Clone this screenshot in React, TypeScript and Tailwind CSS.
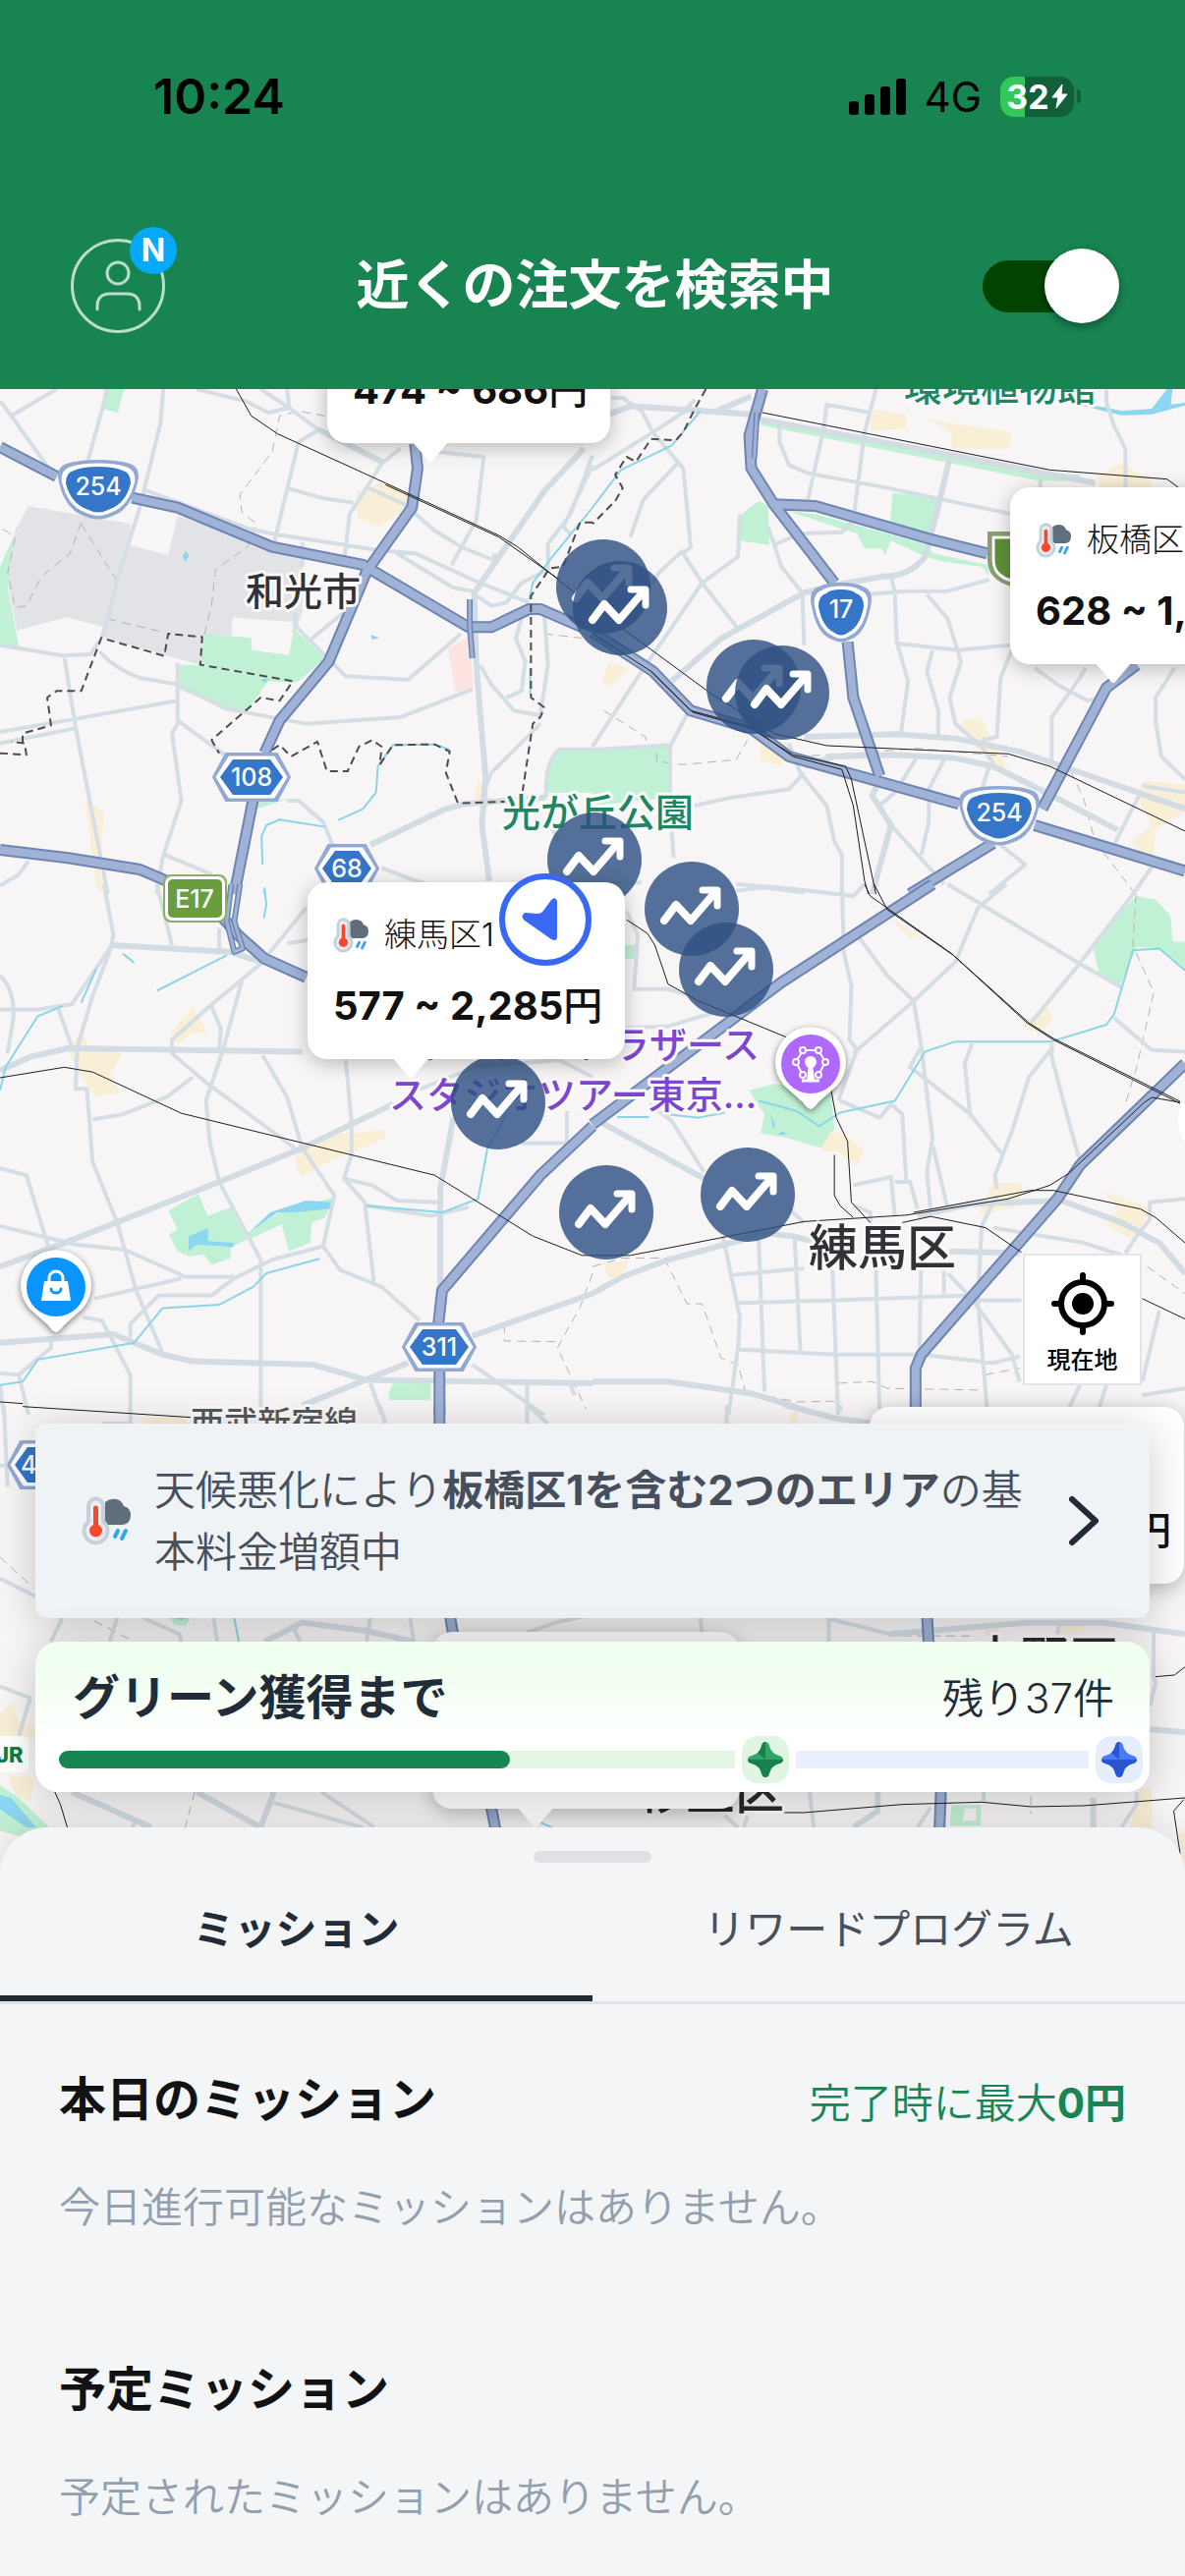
import { useState } from 'react';

type Tile = {
  transform: string;
  base?: string;
  blank?: string;
  park?: string;
  town?: string;
  hospital?: string;
  lake?: string;
  stream?: string;
  minor: string;
  main?: string;
  highway?: string;
  ramp?: string;
  rail?: string;
  border?: string;
  ward?: string;
};

const tiles: Tile[] = [
  {
    transform: 'translate(0 390) scale(.3846 .3333)',
    base: 'M75 375L345 430L345 495L445 525L470 405L720 500L800 520V700L780 760L615 770L540 768L530 860L265 775L275 745L175 715L45 755L15 580L40 450Z',
    blank: 'M615 715L775 730L765 830L668 815V775L612 770Z',
    park: 'M540 765L665 778V815L765 828L778 750L860 840L790 910L775 915L530 860ZM475 860L530 862L775 915L710 910L655 1000L590 990L475 935ZM35 470L0 560V800L50 805L20 620ZM275 18H328L312 90L270 78ZM1480 1118L1568 1120V1250H1445Q1440 1160 1480 1118ZM680 1278L760 1270L680 1300Z',
    town: 'M945 330L1015 300L1085 340L1060 400L1000 440L945 410ZM225 1270L275 1310L265 1480L275 1560L255 1540ZM1265 1210L1300 1270L1255 1270Z',
    hospital: 'M1185 810L1245 770L1252 935L1205 942Z',
    lake: 'M492 512L500 528L490 545L483 528ZM980 768L1005 778L985 783ZM690 905L712 903L700 915Z',
    stream: 'M1190 1120L1150 1103L1040 1105L1000 1170L995 1250L960 1300L895 1335M860 1355L740 1333L705 1350L692 1385L695 1470M1568 380L1455 540L1410 610L1400 660M1403 870V950M700 1540V1560',
    minor: 'M0 55L30 100L135 270M150 18L30 100M285 18L232 240M432 18L425 120L370 380L310 600L285 720L268 780M380 325L660 445L720 460L1000 510L1100 520L1250 600L1400 670M520 18L650 55L710 90L765 75L760 18M690 18L765 75L840 140L1010 240M840 145L790 180L725 490M765 322L850 350L935 365M1060 200L1010 245L970 320L925 400L910 550M975 320L1070 370L1150 450L1220 500L1305 540L1310 520M1160 210L1280 225L1260 420L1195 555M1568 220L1510 400L1450 490V570L1380 610L1340 670L1300 680L1250 640M1568 250L1490 440L1510 460M1050 520L1200 625L1250 635M800 485V560M780 700L785 745L915 895L1080 905L1220 765M910 700L820 785M0 800L165 832L240 828L265 785M265 820Q300 870 370 900L470 920L600 995L810 1040L1060 1020L1250 935M470 855V1030L600 1140M0 1065L200 1025L470 970M0 1100L195 1055M170 835L200 1050L285 1560M475 1030L455 1070L480 1275L430 1450L415 1560M1270 860L1300 920L1360 1000L1430 1015M1385 700L1365 780L1390 850L1380 940L1340 960M1440 700L1450 860L1430 1010M1430 1040L1300 1190L1280 1250M760 1275H790L855 1340L880 1410M435 1440L560 1500M0 1535L50 1500L75 1460M1010 1480L1100 1520L1230 1560M1445 1265Q1440 1160 1480 1118H1568M1445 1330L1480 1400',
    main: 'M1545 200L1440 330L1255 640L1260 850L1270 1000L1285 1200L1275 1350L1295 1520M980 1410L1180 1300L1230 1285L1445 1265M840 140L1010 240',
    highway: 'M0 195L150 285M350 350L470 380L720 500L960 555L1240 745H1300L1400 690H1430L1540 745M1098 185L1105 260L1090 380L970 575L925 700L870 850L740 1030L700 1130M670 1270L620 1560M0 1425L180 1450L370 1485L440 1520',
    ramp: 'M1243 660V740L1250 840',
    rail: 'M625 18L665 100L735 155L1020 305L1320 465L1370 500L1520 640M1020 310L1320 470L1480 600',
    border: 'M0 1130L70 1135L65 1100L30 1095M60 1100V1070L135 1045L125 960L150 940H215L268 778L435 833L445 765L535 775L530 860L775 910L740 970L690 960L560 1090L580 1130M720 1120L740 1105L770 1140L840 1095L865 1185H920L950 1110L985 1090L1010 1110L1005 1165L1040 1105L1150 1103L1190 1125L1180 1190L1212 1283L1335 1278M1568 425H1535L1490 560L1455 565L1405 650V960L1440 990L1430 1020L1410 1040L1383 1245',
    ward: 'M860 100L790 85L740 100L720 210L635 340L640 395L680 430L655 500L570 570L560 680L540 770M215 425L185 520L110 590L70 680L40 685L20 580L40 470L0 440M215 430L310 605M285 720L430 760M1440 765L1550 780',
  },
  {
    transform: 'translate(603 390) scale(.3846 .3333)',
    park: 'M445 118L1180 270L1290 280V300L1180 298L445 128ZM440 360L465 375L468 495L385 480L395 400ZM795 335L920 350L900 480L785 450ZM515 390L590 400L780 460L890 495L900 520L1045 555L1050 590L1030 560L930 545L880 530L790 480L775 525L765 505L720 505L700 460ZM0 1120L205 1105V1265L0 1290Z',
    town: 'M740 80L830 95V140L735 145ZM885 110L1110 150L1100 200H950V150ZM1340 280L1410 240L1430 270L1480 290V318H1340ZM45 850L95 870L40 930L25 905ZM440 1080L520 1100L500 1170L445 1150ZM980 1030L1025 1020L1100 1180L1080 1190L970 1060ZM1455 1215L1568 1225V1310L1490 1360L1480 1500L1425 1400L1480 1350L1440 1260Z',
    lake: 'M1230 50L1360 75L1400 85L1480 78L1520 18H1535L1530 65L1568 60V68L1480 95L1400 98Z',
    stream: 'M285 85L210 190L75 265L0 380',
    minor: 'M0 265L160 150L245 85L270 50M50 45H80L130 85L160 150L240 260L260 500L240 520L290 610L385 750M225 245L135 355L100 470M495 130V180L520 250L570 275L780 320L1110 400M735 90L620 65L610 150L570 355M750 18L720 150L690 420L660 455L545 460L480 495M1360 20V60L1380 130L1410 200V320M1185 290V320M390 400L385 530L290 610L130 880L0 1110M240 510L175 580L120 680M465 440L480 490L500 560L555 640L560 800M725 645L830 635H940L1050 600M790 590L800 640L805 790L835 910L815 1080M885 645L940 720L975 850L945 960L960 1040L1030 1110L1060 1160M805 795L970 815L1105 800M900 815L885 880L915 1000V1080M1115 800L1080 900L1070 1080L1030 1090M1170 870L1230 920L1310 970L1340 960L1350 930M1305 870L1290 900L1215 1020V1170M1540 870L1490 960V1030L1505 1140L1568 1210M205 1110L260 990M520 1100L550 1190L620 1290L640 1400L660 1440V1560M270 1290L370 1265L520 1240L560 1190M205 1105V1300L215 1450M0 1120L205 1105M860 1140L800 1250L760 1290M930 1150L890 1240V1340L870 1440M1050 1170L1030 1240M790 1350L930 1530M1080 1410L1145 1470L1050 1560M1450 1250L1380 1410M1485 1470L1430 1560M1455 1230L1568 1250M1455 1260L1568 1300M0 1530L130 1525M380 1550L450 1540L560 1555',
    main: 'M0 115L100 70L420 95M420 40L330 85M440 110L930 215L1330 305M945 230L910 400L880 530Q840 590 770 590L650 615L560 640L340 780L210 910M560 1080L800 1072L960 1085L1130 1125L1568 1300M560 1170L640 1140L800 1135L960 1145L1060 1170L1200 1250L1390 1365M760 1210L740 1260L790 1350L740 1560',
    highway: 'M450 18L415 160L420 260L480 370L640 610M480 370L590 375L890 475L1045 520M675 790L690 960L760 1200M0 760L160 880L260 1000L420 1055L520 1140L660 1185L970 1285M1170 1350L1568 1490M1190 1300L1360 930L1440 860M1060 1405L840 1560',
    ramp: 'M435 90L428 230',
    rail: 'M450 90L1210 265L1520 293L1550 318M80 750L310 945L480 1070L620 1107L1100 1132L1210 1170L1568 1368M0 765L155 880L260 1000L420 1050L530 1140L660 1180L690 1290L720 1520L730 1560M155 880L265 1005L420 1055L530 1135L670 1170L685 1210L750 1560',
    border: 'M300 18L270 80L240 150L220 175L155 170L115 240L90 225L60 280L80 320L60 360L0 430',
    ward: 'M30 1000L140 1080L145 1105L170 1110V1155L240 1165L380 1150L410 1090M540 1140L700 1130L860 1115L1100 1140M1265 1185L1300 1270L1330 1400L1430 1550',
  },
  {
    transform: 'translate(0 900) scale(.3846 .3444)',
    park: 'M445 965L525 915L550 980L610 955L655 1050L610 1075V1105L560 1125L540 1095L500 1100L470 1085L447 1035L470 1020ZM655 1030L740 970L885 925L860 985L825 1000L820 1060L765 1085L745 1005L660 1050ZM1040 1475H1140V1525H1030V1500Z',
    town: 'M180 490L215 430L235 480L325 500L290 560L320 620L250 625L210 560ZM510 365L550 440H510L470 470L450 440ZM790 770L850 745L1020 725V750L960 780L850 830L800 865L780 830Z',
    lake: 'M660 1028L715 970L810 935L885 940L870 960L780 970L735 970ZM498 1085L500 1040L550 1018V1055L620 1060L615 1072L520 1065Z',
    stream: 'M165 360L100 390L15 540L0 610M255 250L215 350M325 205L355 232M600 210L415 315M700 15L705 60L698 100M1340 680L1290 780L1265 930L1170 970L970 950M845 1107L705 1150L670 1190L580 1243L430 1253L355 1355L100 1405L60 1470L0 1480',
    minor: 'M275 0L300 150L290 200L245 330L205 480L200 605H230L245 820L310 1000L360 1200L430 1385M415 0L455 180M290 190L190 355L100 370H0M0 270Q40 310 35 400L20 500M155 370L190 480M690 235L550 365L455 460V500L550 590L780 780M640 285L590 490L545 640L555 760L580 880L690 1110V1568M560 360L585 430L580 490M245 695L325 680L440 630L510 570M810 70L690 235M815 165L760 175M695 505L760 630L800 780L885 920L855 1070L900 1140L1010 1190L1110 1290M915 520L930 700V800L910 870L965 940L990 1180M910 870L985 890L1050 935L1160 940M970 950L1140 980L1240 955M0 840L70 860L130 1080M0 1010L200 1065L330 1080L490 1160H620M250 1225L480 1165M345 1340V1300L420 1215H560L620 1165L720 1110L855 1070M220 1280L270 1290L345 1450V1568M135 1340V1370L50 1450L0 1445M50 1450L75 1568M0 1480L10 1568M980 1475L1010 1568M1250 1420L1440 1568M1395 1480V1568M1510 1480L1520 1510M1380 765H1500V670M1100 610L1260 540L1480 520L1568 570M580 130V200',
    main: 'M295 180L610 200L690 230M0 550L80 510L180 485L800 495M0 1130L170 1060L580 880L800 780L1040 650M1200 690L1165 900V1190M0 1355L300 1330L430 1390L510 1410L830 1420L970 1465L1568 1475M1250 1335L1568 1210M800 1540L1080 1415',
    highway: 'M590 100L630 150L700 220L810 275M1568 715L1430 860L1170 1200L1160 1300M1163 1440V1568',
    ramp: 'M612 0L600 110L620 200L642 190L620 110L635 0',
    rail: 'M0 572L170 541L245 555L480 677L1150 860L1410 1040L1540 1097H1568M0 1530L60 1535',
    ward: 'M1568 1150L1535 1250L1475 1370L1550 1550M1335 1300V1350L1480 1352M820 1540L960 1460',
  },
  {
    transform: 'translate(603 900) scale(.3846 .3444)',
    park: 'M1440 35L1490 45L1530 95L1535 170H1568V250L1500 190L1440 185L1395 305L1340 260L1325 190L1370 110ZM415 610L480 590L630 610L640 720L620 785L515 750L445 735L455 680ZM85 180H120V220H85Z',
    town: 'M780 90L870 160L840 160ZM1135 420L1195 355L1220 400L1180 440ZM630 730L670 740L720 790L700 830L650 790L600 790ZM1060 880L1135 885L1130 950L1020 980ZM1350 905L1480 960L1430 1050L1360 1010L1390 960ZM300 1000L345 1010L340 1040ZM30 1125L95 1110L80 1160L40 1165Z',
    lake: 'M470 678L484 712L478 722ZM500 730L518 738L490 742Z',
    stream: 'M880 495L960 465H1215L1360 415L1380 385L1430 195L1500 190L1568 255M880 495L800 640L655 675L600 715L540 670L440 640M65 688H150M200 680L280 690L350 675',
    minor: 'M660 0L665 200L685 300L680 460L700 490L650 640M940 0L1290 235L1400 305M1095 0L1020 70L960 230L850 345L690 500M1450 0L1285 240L1160 410M700 150L780 270L850 345L870 480L885 620L900 750L885 850L895 970M870 480L840 540L1000 680L1085 800M900 770L940 960M1220 480L1155 570L1110 730L1065 860L1070 900M1215 470V510L1260 700L1290 820M1005 470L985 530L1000 690M655 640L760 690L790 650L820 680L830 880M690 890L790 865L800 980M800 880H840L860 960M380 0L500 10L690 35L720 0M90 80L120 150L110 310H200L260 330M90 425L200 420L320 380M150 650L210 700L295 850M345 1040L390 1280L385 1370L360 1568M370 1155L560 1135M440 1050L455 1500M535 1050L550 1380M635 1140L650 1568M750 1140L760 1568M870 1100L865 1380L850 1450M385 1238L640 1230L1000 1215M385 1375L640 1390H870L1060 1415L1130 1395M930 1090V1210M1070 920L1030 1010L1020 1230L1045 1568M940 1150L1000 1220L1110 1390L1130 1470M1000 1230H1135M1060 1015L1300 1060L1440 1110M1410 1090L1440 1040L1475 990V940L1568 930M1500 1260L1455 1470M1455 1510L1568 1490M1290 1480L1260 1550M1360 1480L1340 1550M1380 395L1480 490L1568 495M520 960L560 1000M690 950L735 970V1000',
    main: 'M0 690L295 870M0 1210L80 1160L200 1110L400 1050L440 1030L530 1040L580 1055M860 980L1000 945L1240 935L1400 1000L1500 1060L1568 1150M945 1085L1130 1090M0 1470H200L420 1505L540 1545',
    highway: 'M900 0L500 290L0 710M1568 530L1290 830L1230 930L870 1390L855 1430V1568',
    rail: 'M90 105L145 145L165 180L200 295L280 345L515 453M630 600L645 690L675 760L685 940L735 1000M640 800V920L655 950L690 985M0 1097H100L560 997L830 978L1100 930L1210 890L1260 855L1460 645L1480 630L1555 645M820 1000L895 982L1040 1015L1135 1088M850 970L1160 905H1220L1450 960L1490 985L1568 1060M720 0L735 35L950 205L1150 410L1220 460L1555 648M745 0L780 75L955 210L1155 410L1220 456L1555 642M1455 1225L1568 1285',
    ward: 'M1438 30L1430 180L1485 320L1440 540L1410 650M0 1130L80 1105H190L250 1240H290L340 1400L385 1420L405 1500L540 1530L640 1528M650 1475L740 1470L780 1490L1030 1495M1468 1130L1568 1210M1040 1450L1130 1430',
  },
  {
    transform: 'translate(0 1430) scale(.3846 .3333)',
    park: 'M450 651H505L490 675L460 670ZM0 1160L50 1200L130 1290L60 1320L0 1300Z',
    town: 'M0 940L35 910L50 970L90 980V1020H0ZM20 1130L90 1140L80 1210L40 1190ZM375 40L480 35L500 57H380Z',
    lake: 'M0 1190L30 1200L95 1290H70L0 1235ZM460 651H495L480 658Z',
    stream: 'M620 651L632 723M1430 1275L1460 1290',
    minor: 'M10 0L20 250M0 185H40M165 651L135 723M0 530L95 585M310 651L290 723M380 651L475 700L480 723M565 651L575 723M980 651L970 723M1085 651L1095 723M1395 695L1470 665L1568 640M0 860L80 895L50 1010M725 1215L960 1290M850 1182L990 1290M1395 0L1450 57M1395 10V57M1005 0L1020 57M345 0V57H270M360 1270L350 1290M790 670L780 690L795 723',
    main: 'M700 723L800 665L970 690L1095 723M190 1182L400 1290M520 1182L690 1290M725 1182L690 1290',
    highway: 'M1163 0V57M1190 640L1205 740M1300 1230L1312 1300',
    rail: 'M60 5L505 38M145 1182L160 1220L178 1290',
    ward: 'M0 465L90 560M250 660L350 720M515 1182L490 1290',
  },
  {
    transform: 'translate(603 1430) scale(.3846 .3333)',
    park: 'M950 1222H1028V1285H945Z',
    blank: 'M985 1232H1015V1270H980Z',
    town: 'M1450 1170H1480V1300H1420ZM1240 670H1300V695H1220ZM350 30L370 57H345ZM525 20H545V57H520ZM1568 1400V1300L1550 1310Z',
    hospital: 'M1035 690L1075 680L1070 705H1040Z',
    minor: 'M355 0V57M655 0V20M285 651L290 695M625 651V723M630 655L790 700M1235 670L1230 700M1485 690V830L1490 850L1475 920M575 1182L585 1290M1035 1182V1210M895 1230L860 1290M1440 1182V1220L1400 1290M350 1255L385 1290M410 1255L400 1290',
    main: 'M510 0L640 40L740 57M790 700L1150 665H1350L1568 700M1475 990L1568 1000M755 1182V1240L690 1290M1325 1200V1290',
    highway: 'M855 0V20M885 640L890 740M922 1182L918 1300',
    rail: 'M505 1245H560L820 1220L1030 1213L1160 1227L1300 1224L1568 1200M1565 1205L1538 1240L1555 1370M1490 830L1540 825L1568 800',
    ward: 'M630 655L790 705L1010 706M1160 1195V1250',
  },
];

function Line({ d, color, width, dash }: { d?: string; color: string; width: number; dash?: string }) {
  if (!d) return null;
  return (
    <path
      d={d}
      fill="none"
      stroke={color}
      strokeWidth={width}
      strokeDasharray={dash}
      strokeLinejoin="round"
      vectorEffect="non-scaling-stroke"
    />
  );
}

function RouteSign({ x, y, label, kind, half }: { x: number; y: number; label: string; kind: 'national' | 'local'; half: number }) {
  const shape = (w: number, t: number, b: number) =>
    kind === 'national'
      ? `M0 ${-t}Q${w * 0.5} ${-t} ${w - 8} ${-t + 4}Q${w} ${-t + 6} ${w} ${-t + 17}Q${w * 0.85} ${b - 8} ${w * 0.3} ${b - 2}Q0 ${b + 3} ${-w * 0.3} ${b - 2}Q${-w * 0.85} ${b - 8} ${-w} ${-t + 17}Q${-w} ${-t + 6} ${-w + 8} ${-t + 4}Q${-w * 0.5} ${-t} 0 ${-t}Z`
      : `M${-w + 13} ${-t}H${w - 13}L${w} 0L${w - 13} ${t}H${-w + 13}L${-w} 0Z`;
  const t = kind === 'national' ? 28 : 24;
  const b = kind === 'national' ? 30 : 24;
  return (
    <g transform={`translate(${x} ${y})`}>
      <path d={shape(half, t, b)} fill="#93a9d2" stroke="#93a9d2" strokeWidth="2" strokeLinejoin="round" />
      <path d={shape(half - 3, t - 3, b - 3)} fill="#fff" stroke="#fff" strokeLinejoin="round" />
      <path d={shape(half - 7, t - 6, b - 6)} fill="#3676c8" />
      <text y={kind === 'national' ? 7 : 9} textAnchor="middle" fontSize="25" fontWeight="500" fill="#fff">
        {label}
      </text>
    </g>
  );
}

function MapLabel({ x, y, size, color, end, children }: { x: number; y: number; size: number; color: string; end?: boolean; children: string }) {
  return (
    <text
      x={x}
      y={y}
      fontSize={size}
      fontWeight="500"
      fill={color}
      stroke="#fbfafb"
      strokeWidth="6"
      strokeLinejoin="round"
      paintOrder="stroke"
      textAnchor={end ? 'end' : 'start'}
    >
      {children}
    </text>
  );
}

function MapCanvas() {
  return (
    <svg className="absolute inset-0 h-full w-full" viewBox="0 396 1206 1512" preserveAspectRatio="xMinYMin slice" aria-hidden="true">
      <rect y="396" width="1206" height="1512" fill="#f7f5f6" />
      {tiles.map((t) => (
        <g key={t.transform} transform={t.transform}>
          <path d={t.base ?? ''} fill="#e1e3e7" />
          <path d={t.park ?? ''} fill="#c1f1d4" />
          <path d={t.blank ?? ''} fill="#f7f5f6" />
          <path d={t.town ?? ''} fill="#f9efd7" />
          <path d={t.hospital ?? ''} fill="#fde4e1" />
          <path d={t.lake ?? ''} fill="#8bd6f0" />
          <Line d={t.ward} color="#b3b3b5" width={1} dash="9 6" />
          <Line d={t.minor} color="#d5dee4" width={4} />
          <Line d={t.main} color="#d3dce3" width={6} />
          <Line d={t.stream} color="#8ad5e8" width={2} />
          <Line d={t.highway} color="#6e84b3" width={12} />
          <Line d={t.highway} color="#a0b3d6" width={8} />
          <Line d={t.ramp} color="#6e84b3" width={6} />
          <Line d={t.ramp} color="#a0b3d6" width={3} />
          <Line d={t.border} color="#4c4c4e" width={2} dash="8 5" />
          <Line d={t.rail} color="#1d1d1f" width={1} />
        </g>
      ))}

      <g className="font-['Inter','Noto_Sans_CJK_JP',sans-serif]">
        <RouteSign kind="national" x={100} y={497} half={40} label="254" />
        <RouteSign kind="national" x={856} y={622} half={30} label="17" />
        <RouteSign kind="national" x={1017} y={829} half={40} label="254" />
        <RouteSign kind="local" x={256} y={791} half={39} label="108" />
        <RouteSign kind="local" x={353} y={884} half={32} label="68" />
        <RouteSign kind="local" x={447} y={1371} half={37} label="311" />
        <RouteSign kind="local" x={45} y={1491} half={37} label="439" />
        <rect x="166" y="890" width="65" height="49" rx="8" fill="#8ab06a" />
        <rect x="168" y="892" width="61" height="45" rx="7" fill="#fff" />
        <rect x="171" y="895" width="55" height="39" rx="5" fill="#699d3e" />
        <text x="198" y="924" textAnchor="middle" fontSize="25" fontWeight="500" fill="#fff">E17</text>
        <path d="M1007 543H1060V596H1034Q1007 590 1007 570Z" fill="#5f9139" stroke="#8a9f72" strokeWidth="4" />
        <path d="M1011 547H1060V592H1034Q1011 588 1011 570Z" fill="#5f9139" stroke="#fff" strokeWidth="3" />

        <MapLabel x={250} y={616} size={39} color="#323236">和光市</MapLabel>
        <MapLabel x={511} y={841} size={39} color="#1d8762">光が丘公園</MapLabel>
        <MapLabel x={920} y={408} size={39} color="#1d8762">環境植物館</MapLabel>
        <MapLabel x={773} y={1077} size={38} color="#7d46cf" end>ワーナー ブラザース</MapLabel>
        <MapLabel x={396} y={1128} size={38} color="#7d46cf">スタジオツアー東京...</MapLabel>
        <MapLabel x={823} y={1288} size={50} color="#323236">練馬区</MapLabel>
        <MapLabel x={194} y={1461} size={34} color="#56585c">西武新宿線</MapLabel>
        <MapLabel x={988} y={1707} size={50} color="#2b2b2e">中野区</MapLabel>
        <MapLabel x={648} y={1841} size={50} color="#2b2b2e">杉並区</MapLabel>

        <rect x="-20" y="1767" width="49" height="37" rx="5" fill="#fff" />
        <text x="-4" y="1794" fontSize="22" fontWeight="800" fill="#0b8043">JR</text>
      </g>

      <g transform="translate(57 1310)">
        <path d="M0 46Q-3 46 -8 39L-27 22A36 36 0 1 1 27 22L8 39Q3 46 0 46Z" fill="#fff" className="drop-shadow-[0_2px_3px_rgba(0,0,0,0.5)]" />
        <circle r="30" fill="#0a94ff" />
        <path d="M-12 -6H12L15 14H-15Z" fill="#fff" />
        <path d="M-7 -6V-9A7 7 0 0 1 7 -9V-6" fill="none" stroke="#fff" strokeWidth="3" />
        <path d="M-5 2A5 4 0 0 0 5 2" fill="none" stroke="#0a94ff" strokeWidth="3" strokeLinecap="round" />
      </g>
      <g transform="translate(825 1083)">
        <path d="M0 46Q-3 46 -8 39L-27 22A36 36 0 1 1 27 22L8 39Q3 46 0 46Z" fill="#fff" className="drop-shadow-[0_2px_3px_rgba(0,0,0,0.5)]" />
        <circle r="30" fill="#b069ff" />
        <g fill="none" stroke="#fff" strokeWidth="2">
          <path d="M-8 -14L8 -14L15 -2L8 11M-8 -14L-15 -2L-8 11" />
          {[[-8, -14], [8, -14], [15, -2], [8, 11], [-8, 11], [-15, -2]].map(([cx, cy]) => (
            <circle key={`${cx},${cy}`} cx={cx} cy={cy} r="3" fill="#b069ff" />
          ))}
          <path d="M-9 17H9" strokeWidth="3" />
        </g>
        <circle cy="-2" r="6" fill="#fff" />
        <path d="M-2 0H2L4 16H-4Z" fill="#fff" />
      </g>
      <circle cx="1236" cy="1141" r="37" fill="#fff" />
    </svg>
  );
}

function WeatherIcon({ className }: { className: string }) {
  return (
    <svg className={className} viewBox="0 0 50 50" aria-hidden="true">
      <path d="M24 28V6Q29 2 35 3Q41 4 43 10Q50 12 50 19Q50 28 42 29H27Z" fill="#5f6d7c" />
      <path d="M37 35L34 41M45 35L41 43" stroke="#34a6f0" strokeWidth="4" strokeLinecap="round" />
      <path d="M5 10A9 9 0 0 1 24 10V25A14 14 0 1 1 5 25Z" fill="#c7d0da" />
      <path d="M9 10A5 5 0 0 1 20 10V27A10 10 0 1 1 9 27Z" fill="#e9edf2" />
      <path d="M14.500 12V36" stroke="#f8482a" strokeWidth="5" strokeLinecap="round" />
      <circle cx="14.500" cy="35" r="6.500" fill="#f8482a" />
    </svg>
  );
}

// Each pin hangs from its top left corner on the map canvas
const demandPins = [
  'left-[566px] top-[153px]',
  'left-[583px] top-[175px]',
  'left-[719px] top-[255px]',
  'left-[748px] top-[261px]',
  'left-[557px] top-[431px]',
  'left-[656px] top-[481px]',
  'left-[691px] top-[543px]',
  'left-[459px] top-[678px]',
  'left-[569px] top-[790px]',
  'left-[713px] top-[772px]',
];

const areas = [
  { name: '和光市1', price: '474 ~ 686', place: 'left-[333px] top-[-125px] w-[288px]' },
  { name: '板橋区1', price: '628 ~ 1,854', place: 'left-[1028px] top-[100px] w-[323px]' },
  { name: '練馬区1', price: '577 ~ 2,285', place: 'left-[313px] top-[502px] w-[323px]' },
  { name: '中野区1', price: '560 ~ 2,020', place: 'left-[885px] top-[1036px] w-[320px]' },
  { name: '杉並区1', price: '540 ~ 1,180', place: 'left-[440px] top-[1265px] w-[313px]' },
];

function DemandPin({ place }: { place: string }) {
  return (
    <div className={`absolute size-24 rounded-full bg-[rgba(46,80,130,0.81)] ${place}`}>
      <svg viewBox="-48 -48 96 96" fill="none" stroke="#fff" strokeWidth="8" strokeLinecap="round" strokeLinejoin="round" aria-hidden="true">
        <path d="M-28 12L-16 -4L-1 12L24 -17" />
        <path d="M11 -19H26V-3" strokeWidth="7" />
      </svg>
    </div>
  );
}

function AreaBubble({ name, price, place }: { name: string; price: string; place: string }) {
  return (
    <button className={`absolute flex h-45 flex-col items-start rounded-[20px] bg-white pt-[34px] pl-[26px] text-[#111] shadow-[0_4px_20px_rgba(0,0,0,0.26)] ${place}`}>
      <span className="flex h-10 items-center gap-4 text-[33px] font-light whitespace-nowrap">
        <WeatherIcon className="size-9" />
        {name}
      </span>
      <span className="mt-7 text-[40px] leading-[48px] font-bold whitespace-nowrap">
        {price}
        <span className="font-medium">円</span>
      </span>
      <svg className="absolute top-[178px] left-[86px] h-[22px] w-[38px]" viewBox="0 0 38 22" aria-hidden="true">
        <path d="M0 0H38L21 20Q19 22 17 20Z" fill="#fff" />
      </svg>
    </button>
  );
}

function StarBadge({ light, dark, className }: { light: string; dark: string; className: string }) {
  return (
    <span className={`size-12 shrink-0 rounded-2xl ${className}`}>
      <svg viewBox="-24 -24 48 48" aria-hidden="true">
        <path d="M0 -18Q3 -18 4 -14Q6 -6 14 -4Q18 -3 18 0Q18 3 14 4Q6 6 4 14Q3 18 0 18Q-3 18 -4 14Q-6 6 -14 4Q-18 3 -18 0Q-18 -3 -14 -4Q-6 -6 -4 -14Q-3 -18 0 -18Z" fill={light} />
        <path d="M0 0V-18Q-3 -18 -4 -14Q-5 -9 -8 -7ZM0 0H-18Q-18 3 -14 4Q-10 5 -8 7ZM0 0V18Q3 18 4 14Q5 9 8 7ZM0 0H18Q18 3 14 4Q10 5 8 7ZM0 0V18Q-3 18 -4 14Q-5 9 -8 7Z" fill={dark} />
      </svg>
    </span>
  );
}

function Header() {
  const [online, setOnline] = useState(true);
  return (
    <header className="relative z-10 bg-[#188451] pb-2.5">
      <div className="flex h-49 items-center justify-between pr-[106px] pl-[156px] text-black">
        <span className="text-[50px] font-semibold">10:24</span>
        <div className="flex items-center gap-[19px]">
          <svg className="h-[38px] w-[58px]" viewBox="0 0 58 38" aria-hidden="true">
            <rect x="0" y="24" width="10" height="14" rx="3" />
            <rect x="16" y="17" width="10" height="21" rx="3" />
            <rect x="32" y="9" width="10" height="29" rx="3" />
            <rect x="48" y="1" width="10" height="37" rx="3" />
          </svg>
          <span className="text-[42px]">4G</span>
          <div className="flex items-center gap-[3px]">
            <div className="flex h-[41px] w-[75px] items-center justify-center overflow-hidden rounded-[14px] bg-linear-to-r from-[#34c759] from-33% to-[#12603a] to-33% text-[34px] font-bold text-white">
              32
              <svg className="ml-0.5 h-[26px] w-[17px]" viewBox="0 0 17 26" fill="#fff" stroke="#fff" strokeLinejoin="round" aria-hidden="true">
                <path d="M11 1L1 14H7L5 25L16 11H10Z" />
              </svg>
            </div>
            <span className="h-3.5 w-1 rounded-r-full bg-[#12603a]" />
          </div>
        </div>
      </div>
      <div className="grid h-[190px] grid-cols-[1fr_auto_1fr] items-center pr-[67px] pl-[72px]">
        <button aria-label="プロフィール" className="relative size-24 rounded-full border-3 border-[#bcdccb]">
          <svg className="size-full" viewBox="0 0 90 90" fill="none" stroke="#bcdccb" strokeWidth="3" strokeLinecap="round" aria-hidden="true">
            <circle cx="45" cy="32" r="11" />
            <path d="M24 69V66Q24 53 37 53H54Q67 53 67 66V69" />
          </svg>
          <span className="absolute -top-[15px] left-[57px] flex size-12 items-center justify-center rounded-full bg-[#06a9fb] text-[32px] font-bold text-white">N</span>
        </button>
        <h1 className="text-[54px] leading-[64px] font-bold text-white">近くの注文を検索中</h1>
        <label className="relative flex h-19 w-[139px] items-center justify-self-end">
          <input type="checkbox" role="switch" aria-label="オンライン" className="peer sr-only" checked={online} onChange={() => setOnline(!online)} />
          <span className="h-[53px] w-[120px] rounded-full bg-[#5e8f78] peer-checked:bg-[#004400]" />
          <span className="absolute left-0 size-19 rounded-full bg-white shadow-[0_3px_8px_rgba(0,0,0,0.4)] peer-checked:left-[63px]" />
        </label>
      </div>
    </header>
  );
}

function MapSection() {
  return (
    <section className="relative flex min-h-[1512px] flex-col justify-end overflow-hidden bg-[#f7f5f6] px-9 pb-[84px]">
      <MapCanvas />
      {demandPins.map((place) => (
        <DemandPin key={place} place={place} />
      ))}
      {areas.map((area) => (
        <AreaBubble key={area.name} {...area} />
      ))}
      <svg className="absolute top-[492px] left-[507px] size-24" viewBox="-48 -48 96 96" aria-hidden="true">
        <circle r="44" fill="#fff" stroke="#3868f4" strokeWidth="6" />
        <path d="M-21 -7Q-26 -3 -21 1L6 20Q12 23 12 17V-19Q10 -24 6 -20L-2 -9Q-4 -6 -8 -6Z" fill="#3868f4" />
      </svg>

      <button className="relative mr-2 mb-[39px] flex h-[134px] w-[121px] flex-col items-center self-end border-2 border-[#e1e4e8] bg-white pt-[17px] text-[24px] leading-8 font-medium text-black">
        <svg className="mb-2.5 size-16" viewBox="-32 -32 64 64" fill="none" stroke="#000" strokeWidth="6" aria-hidden="true">
          <circle r="22" />
          <path d="M0 -29V-22M0 29V22M-29 0H-22M29 0H22" strokeLinecap="round" />
          <circle r="11" fill="#000" stroke="none" />
        </svg>
        現在地
      </button>

      <button className="relative flex items-center rounded-xl bg-[#eff3f6] py-9 pr-[50px] pl-[47px] text-left text-[42px] leading-[63px] font-[350] text-[#474f5c] shadow-[0_6px_44px_rgba(0,0,0,0.2)]">
        <WeatherIcon className="size-[50px] shrink-0" />
        <span className="ml-6 w-[900px] shrink">
          天候悪化により<b className="font-bold">板橋区1を含む2つのエリア</b>の基本料金増額中
        </span>
        <svg className="ml-auto h-[54px] w-8 shrink-0" viewBox="0 0 32 54" fill="none" stroke="#222b38" strokeWidth="6" strokeLinecap="round" strokeLinejoin="round" aria-hidden="true">
          <path d="M3 5L27 27L3 49" />
        </svg>
      </button>

      <div className="relative mt-6 h-[153px] rounded-3xl bg-linear-to-b from-[#f1fff1] from-20% to-white to-60% pt-[25px] text-[#222b38] shadow-[0_6px_44px_rgba(0,0,0,0.2)]">
        <div className="flex h-16 items-center justify-between pr-9 pl-[38px]">
          <h2 className="text-[48px] leading-[64px] font-bold">グリーン獲得まで</h2>
          <span className="text-[42px] font-[350]">残り37件</span>
        </div>
        <div className="mt-[7px] flex items-center gap-[7px] pr-[7px] pl-6">
          <div className="h-[18px] flex-[692] rounded-l-full bg-[#e3f6e3]">
            <div className="h-full w-2/3 rounded-full bg-[#188653]" />
          </div>
          <StarBadge className="bg-[#e0f5e2]" light="#2fa568" dark="#17804d" />
          <div className="h-[18px] flex-[300] bg-[#e9effd]" />
          <StarBadge className="bg-[#e6edfd]" light="#4a7af8" dark="#2a55d2" />
        </div>
      </div>
    </section>
  );
}

function MissionBlock({ title, reward, message }: { title: string; reward?: boolean; message: string }) {
  return (
    <section className="h-[295px] px-15">
      <div className="flex items-center justify-between">
        <h2 className="text-[48px] leading-[64px] font-bold text-[#111214]">{title}</h2>
        {reward && (
          <p className="pt-2 text-[42px] leading-[56px] font-[350] text-[#188653]">
            完了時に最大<b className="font-bold">0円</b>
          </p>
        )}
      </div>
      <p className="mt-12 text-[42px] leading-[60px] font-[350] text-[#929fae]">{message}</p>
    </section>
  );
}

export default function App() {
  const [tab, setTab] = useState('ミッション');
  return (
    <main className="flex min-h-screen flex-col bg-[#f3f5f7] font-['Inter','Noto_Sans_CJK_JP',sans-serif]">
      <Header />
      <MapSection />
      <div className="relative -mt-12 flex-1 rounded-t-[48px] bg-[#f3f5f7] pt-6 shadow-[0_0_40px_rgba(0,0,0,0.14)]">
        <div className="mx-auto h-3 w-30 rounded-full bg-[#dfe1e4]" />
        <div role="tablist" className="grid grid-cols-2 border-b-3 border-[#e0e3e7]">
          {['ミッション', 'リワードプログラム'].map((name) => (
            <button
              key={name}
              role="tab"
              aria-selected={tab === name}
              onClick={() => setTab(name)}
              className="h-[141px] border-b-6 border-transparent text-[42px] font-normal text-[#474f5c] aria-selected:border-[#222b33] aria-selected:font-bold aria-selected:text-[#222b38]"
            >
              {name}
            </button>
          ))}
        </div>
        <div className="pt-[65px]">
          <MissionBlock title="本日のミッション" reward message="今日進行可能なミッションはありません。" />
          <MissionBlock title="予定ミッション" message="予定されたミッションはありません。" />
        </div>
      </div>
    </main>
  );
}
